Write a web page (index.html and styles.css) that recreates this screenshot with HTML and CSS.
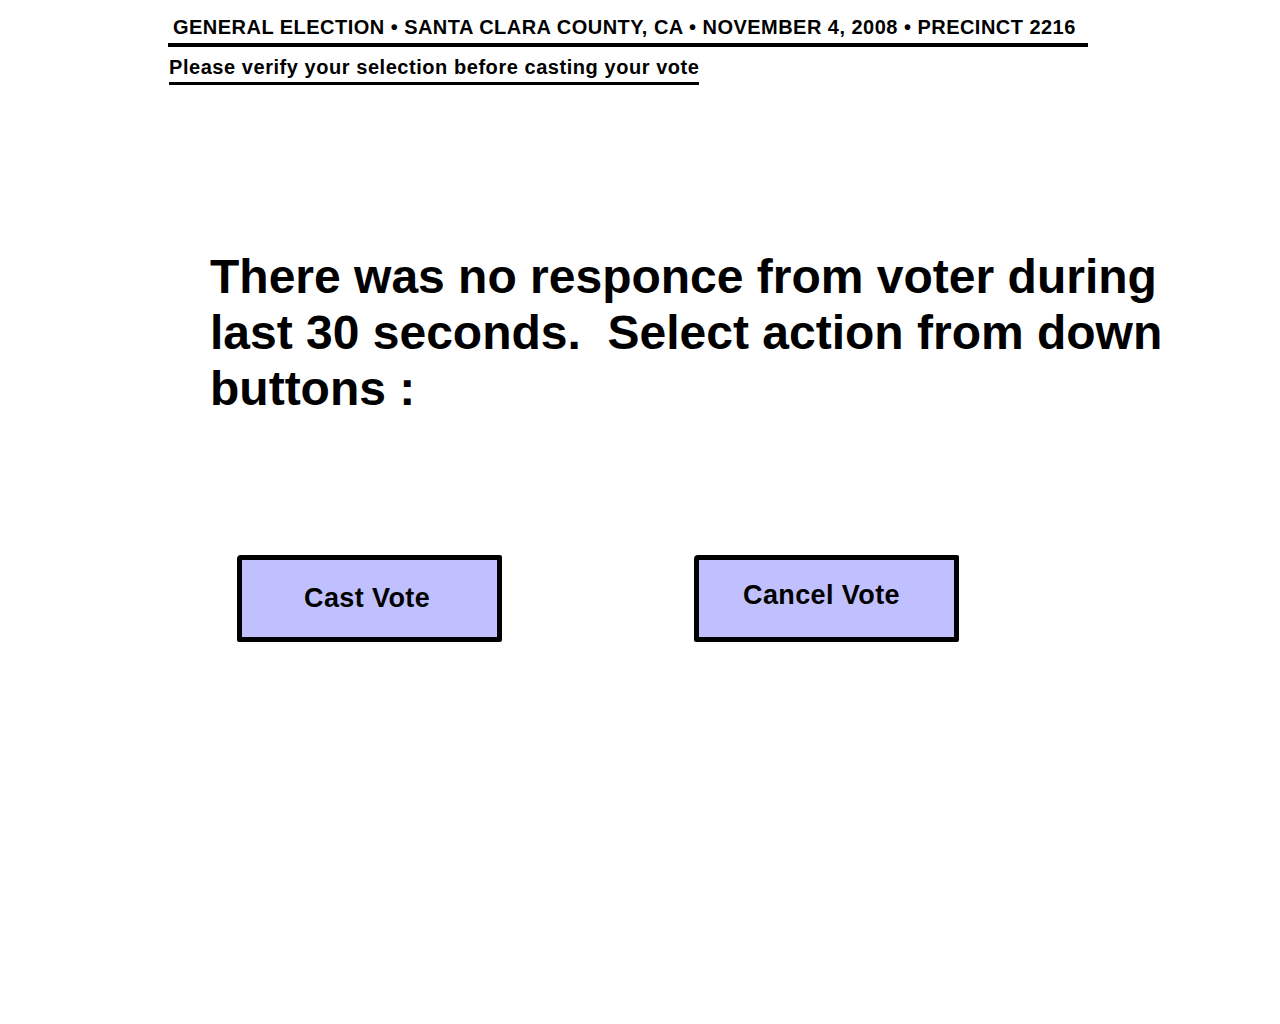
FILE: index.html
```html
<!DOCTYPE html>
<html>
<head>
<meta charset="utf-8">
<link rel="stylesheet" href="styles.css">
</head>
<body>
<div class="page">
  <div class="header">GENERAL ELECTION &bull; SANTA CLARA COUNTY, CA &bull; NOVEMBER 4, 2008 &bull; PRECINCT 2216</div>
  <div class="subheader">Please verify your selection before casting your vote</div>
  <div class="message">There was no responce from voter during last 30 seconds.&nbsp; Select action from down buttons :</div>
  <div class="actions">
    <div class="btn btn-cast">Cast Vote</div>
    <div class="btn btn-cancel">Cancel Vote</div>
  </div>
</div>
</body>
</html>
```
FILE: styles.css
```css
html, body {
  margin: 0;
  padding: 0;
  background: #ffffff;
}
body {
  font-family: "Liberation Sans", Arial, sans-serif;
  color: #000;
}
.page {
  padding: 16px 0 0 168px;
}
.header {
  width: 915px;
  padding-left: 5px;
  padding-bottom: 4px;
  border-bottom: 4px solid #000;
  font-size: 20px;
  font-weight: bold;
  line-height: 23px;
  letter-spacing: 0.47px;
  white-space: nowrap;
}
.subheader {
  display: inline-block;
  margin-top: 9px;
  margin-left: 1px;
  padding-bottom: 3px;
  border-bottom: 3px solid #000;
  font-size: 20px;
  font-weight: bold;
  line-height: 23px;
  letter-spacing: 0.55px;
}
.message {
  margin-top: 164px;
  margin-left: 42px;
  width: 970px;
  font-size: 48px;
  font-weight: bold;
  line-height: 56px;
}
.actions {
  display: flex;
  gap: 192px;
  margin-top: 138px;
  margin-left: 69px;
}
.btn {
  box-sizing: border-box;
  width: 265px;
  height: 87px;
  border: 5px solid #000;
  border-radius: 4px 2px 2px 2px;
  background: #c0c0ff;
  font-size: 27px;
  font-weight: bold;
  line-height: 31px;
  letter-spacing: 0.4px;
}
.btn-cast {
  padding: 23px 0 0 62px;
}
.btn-cancel {
  padding: 20px 0 0 44px;
}
```
